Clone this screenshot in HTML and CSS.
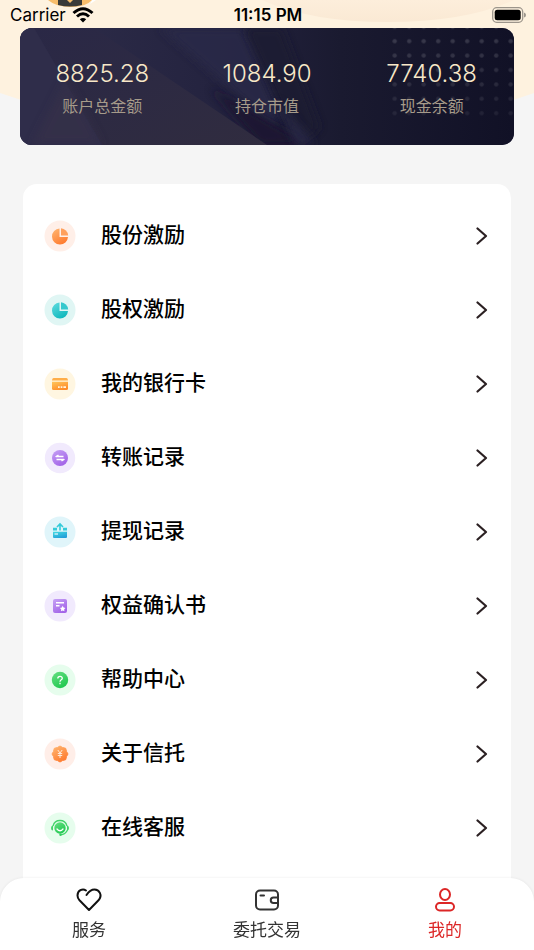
FILE: index.html
```html
<!DOCTYPE html>
<html lang="zh-CN">
<head>
  <meta charset="UTF-8" />
  <meta name="viewport" content="width=device-width, initial-scale=1" />
  <title>我的</title>
  <link rel="stylesheet" href="styles.css">
</head>
<body>

  <!-- header background -->
  <svg class="header-bg" viewBox="0 0 534 140" preserveAspectRatio="none" aria-hidden="true">
    <defs>
      <linearGradient id="ring" x1="0" y1="0" x2="0" y2="1">
        <stop offset="0" stop-color="#fdeedb" />
        <stop offset="1" stop-color="#fae9d4" />
      </linearGradient>
    </defs>
    <path d="M0 0H534V93Q400 140 267 140T0 93Z" fill="#fef2df" />
    <path d="M262 0Q310 22 388 22T514 0Z" fill="url(#ring)" />
    <path d="M92 0H96L90 4Z" fill="#fff" />
    <path d="M48 0Q56 7 71 7T92 0Z" fill="#f7bd6b" />
    <path d="M58 0H82V5Q70 8 58 5Z" fill="#393a38" />
    <path d="M67 0H73L70 3Z" fill="#f7bd6b" />
  </svg>

  <header class="status-bar">
    <div class="carrier">
      <span>Carrier</span>
      <svg width="22" height="16" viewBox="0 0 22 16" fill="none" stroke="#000" stroke-width="3">
        <path d="M1.5 6Q11-2.5 20.500 6" />
        <path d="M5 9.500Q11 4 17 9.500" />
        <path d="M7.800 12.300L11 15.500L14.200 12.300Q11 9.800 7.800 12.300Z" fill="#000" stroke="none" />
      </svg>
    </div>
    <div class="time">11:15 PM</div>
    <div class="battery">
      <svg width="34" height="16" viewBox="0 0 34 16">
        <rect x="0.7" y="0.7" width="30" height="14.600" rx="4" fill="none" stroke="#9c958b" stroke-width="1.300" />
        <rect x="2.700" y="2.700" width="26" height="10.600" rx="2.500" fill="#000" />
        <path d="M32 5.500Q34 6 34 8T32 10.500Z" fill="#9c958b" />
      </svg>
    </div>
  </header>

  <main>
    <section class="account">
      <svg class="account-bg" viewBox="0 0 494 117" preserveAspectRatio="none" aria-hidden="true">
        <defs>
          <linearGradient id="card" x1="0" y1="0" x2="1" y2="0">
            <stop offset="0" stop-color="#2e2d4a" />
            <stop offset="0.4" stop-color="#24233f" />
            <stop offset="0.65" stop-color="#1a1a30" />
            <stop offset="1" stop-color="#111126" />
          </linearGradient>
          <linearGradient id="beam" x1="0" y1="0" x2="1" y2="1">
            <stop offset="0" stop-color="#2a2846" />
            <stop offset="1" stop-color="#302c3f" />
          </linearGradient>
          <linearGradient id="fade" x1="0" y1="0" x2="0" y2="1">
            <stop offset="0" stop-color="#fff" stop-opacity="0.16" />
            <stop offset="1" stop-color="#fff" stop-opacity="0.06" />
          </linearGradient>
          <filter id="soft"><feGaussianBlur stdDeviation="4" /></filter>
          <pattern id="dots" x="0" y="6" width="14.500" height="14.400" patternUnits="userSpaceOnUse" patternTransform="translate(367.500 0)">
            <circle cx="7.200" cy="7.200" r="2.200" fill="#fff" />
          </pattern>
          <mask id="dotMask">
            <rect x="367.500" y="0" width="127" height="93" fill="url(#dots)" />
          </mask>
        </defs>
        <rect width="494" height="117" fill="url(#card)" />
        <path d="M140 0H224L262 90L250 95Z" fill="#2b2a48" opacity="0.8" filter="url(#soft)" />
        <path d="M224 0H262L300 100L278 117Z" fill="#1b1a32" opacity="0.8" filter="url(#soft)" />
        <path d="M190 60L290 117H240Z" fill="#1a1930" opacity="0.9" filter="url(#soft)" />
        <path d="M255 70L296 117H276Z" fill="#2b2948" opacity="0.8" filter="url(#soft)" />
        <path d="M14 0H74L247 117H82Z" fill="url(#beam)" />
        <path d="M0 0H14L82 117H0Z" fill="#2f2d4a" />
        <path d="M46 50L82 117H12Z" fill="#393249" opacity="0.6" filter="url(#soft)" />
        <rect x="367" width="127" height="93" fill="url(#fade)" mask="url(#dotMask)" />
      </svg>
      <dl class="amounts">
        <div class="amount"><dt>账户总金额</dt><dd>8825.28</dd></div>
        <div class="amount"><dt>持仓市值</dt><dd>1084.90</dd></div>
        <div class="amount"><dt>现金余额</dt><dd>7740.38</dd></div>
      </dl>
    </section>

    <!-- shared icon pieces -->
    <svg class="defs" aria-hidden="true">
      <defs>
        <linearGradient id="orange" x1="0" y1="0" x2="0.6" y2="1"><stop offset="0" stop-color="#ffb873" /><stop offset="1" stop-color="#ff7c30" /></linearGradient>
        <linearGradient id="teal" x1="0" y1="0" x2="0.6" y2="1"><stop offset="0" stop-color="#62dce0" /><stop offset="1" stop-color="#10b9bd" /></linearGradient>
        <linearGradient id="amber" x1="0" y1="0" x2="0.6" y2="1"><stop offset="0" stop-color="#ffc65c" /><stop offset="1" stop-color="#ff8b29" /></linearGradient>
        <linearGradient id="purple" x1="0" y1="0" x2="0.6" y2="1"><stop offset="0" stop-color="#c6a2f5" /><stop offset="1" stop-color="#a364e8" /></linearGradient>
        <linearGradient id="cyan" x1="0" y1="0" x2="0.6" y2="1"><stop offset="0" stop-color="#43dce1" /><stop offset="1" stop-color="#239fd9" /></linearGradient>
        <linearGradient id="green" x1="0" y1="0" x2="0.6" y2="1"><stop offset="0" stop-color="#68df83" /><stop offset="1" stop-color="#21c951" /></linearGradient>
        <symbol id="arrow" viewBox="0 0 12 18"><path d="M1.500 1.500L10 9L1.500 16.500" fill="none" stroke="#2b2022" stroke-width="2.200" stroke-linecap="round" stroke-linejoin="round" /></symbol>
      </defs>
    </svg>

    <nav class="menu">
      <a class="menu-item" href="#">
        <svg class="icon" viewBox="0 0 32 32">
          <circle cx="16" cy="16" r="15.500" fill="#ffefe8" />
          <path d="M15.500 8.500A8 8 0 1 0 24 17H15.500Z" fill="url(#orange)" />
          <path d="M17 8.300A8 8 0 0 1 24.200 15.500H17Z" fill="#ffa05c" />
        </svg>
        <span>股份激励</span>
        <svg class="arrow"><use href="#arrow" /></svg>
      </a>
      <a class="menu-item" href="#">
        <svg class="icon" viewBox="0 0 32 32">
          <circle cx="16" cy="16" r="15.500" fill="#e0f6f4" />
          <path d="M15.500 8.500A8 8 0 1 0 24 17H15.500Z" fill="url(#teal)" />
          <path d="M17 8.300A8 8 0 0 1 24.200 15.500H17Z" fill="#35c8cd" />
        </svg>
        <span>股权激励</span>
        <svg class="arrow"><use href="#arrow" /></svg>
      </a>
      <a class="menu-item" href="#">
        <svg class="icon" viewBox="0 0 32 32">
          <circle cx="16" cy="16" r="15.500" fill="#fff6e1" />
          <path d="M9.500 10H22.500Q24 10 24 12.500H8Q8 10 9.500 10Z" fill="#ffae49" />
          <path d="M8 13.800H24V20.500Q24 22 22.500 22H9.500Q8 22 8 20.500Z" fill="url(#amber)" />
          <path d="M14 19.200H15.700M16.700 19.200H18.400M19.400 19.200H22" stroke="#fff3df" stroke-width="1.800" />
        </svg>
        <span>我的银行卡</span>
        <svg class="arrow"><use href="#arrow" /></svg>
      </a>
      <a class="menu-item" href="#">
        <svg class="icon" viewBox="0 0 32 32">
          <circle cx="16" cy="16" r="15.200" fill="#f1eafd" />
          <circle cx="16" cy="16" r="8" fill="url(#purple)" />
          <path d="M19.500 14.500H12L14.500 13M12.500 17.500H20L17.500 19" fill="none" stroke="#fff" stroke-width="1.400" stroke-linejoin="round" />
        </svg>
        <span>转账记录</span>
        <svg class="arrow"><use href="#arrow" /></svg>
      </a>
      <a class="menu-item" href="#">
        <svg class="icon" viewBox="0 0 32 32">
          <circle cx="16" cy="16" r="15.500" fill="#e0f5fa" />
          <path d="M9 11.800H13V14.400H9ZM19 11.800H23V14.400H19Z" fill="#35cbd9" />
          <path d="M16 14.400V8.500M13 11L16 8L19 11" fill="none" stroke="#35cbd9" stroke-width="1.600" />
          <path d="M9 15.800H23V21Q23 22 22 22H10Q9 22 9 21Z" fill="url(#cyan)" />
          <path d="M10.500 18H14" stroke="#e0f5fa" stroke-width="1.300" />
        </svg>
        <span>提现记录</span>
        <svg class="arrow"><use href="#arrow" /></svg>
      </a>
      <a class="menu-item" href="#">
        <svg class="icon" viewBox="0 0 32 32">
          <circle cx="16" cy="16" r="15.500" fill="#f1eafd" />
          <rect x="9" y="9" width="14" height="14" rx="2" fill="url(#purple)" />
          <path d="M12 12.800H20M12 15.800H15.500" stroke="#fff" stroke-width="1.400" />
          <path d="M18.700 15.800L19.600 17.500L21.500 17.900L20.200 19.300L20.400 21.200L18.700 20.400L17 21.200L17.200 19.300L15.900 17.900L17.800 17.500Z" fill="#fff" />
        </svg>
        <span>权益确认书</span>
        <svg class="arrow"><use href="#arrow" /></svg>
      </a>
      <a class="menu-item" href="#">
        <svg class="icon" viewBox="0 0 32 32">
          <circle cx="16" cy="16" r="15.500" fill="#e6fded" />
          <circle cx="16" cy="16" r="8.200" fill="url(#green)" />
          <path d="M13.800 14.500Q13.800 12.300 16 12.300T18.300 14.300Q18.300 15.300 17 16Q16 16.600 16 17.800M16 18.800V20.200" fill="none" stroke="#fff" stroke-width="1.300" />
        </svg>
        <span>帮助中心</span>
        <svg class="arrow"><use href="#arrow" /></svg>
      </a>
      <a class="menu-item" href="#">
        <svg class="icon" viewBox="0 0 32 32">
          <circle cx="16" cy="16" r="15.500" fill="#ffeee8" />
          <path d="M16 8L18.600 9.500L21.700 10.300L22.500 13.400L24 16L22.500 18.600L21.700 21.700L18.600 22.500L16 24L13.400 22.500L10.300 21.700L9.500 18.600L8 16L9.500 13.400L10.300 10.300L13.400 9.500Z" fill="url(#orange)" stroke="url(#orange)" stroke-linejoin="round" />
          <path d="M13.800 12L16 15L18.200 12M16 15V20M13.800 15.500H18.200M13.800 17.500H18.200" fill="none" stroke="#ffe9d9" stroke-width="1" />
        </svg>
        <span>关于信托</span>
        <svg class="arrow"><use href="#arrow" /></svg>
      </a>
      <a class="menu-item" href="#">
        <svg class="icon" viewBox="0 0 32 32">
          <circle cx="16" cy="16" r="15.500" fill="#e6fded" />
          <path d="M9 14Q10.500 8.500 16 8.500T23 14M23.500 18Q21.500 22.500 16.500 22.800" fill="none" stroke="#43d46a" stroke-width="1.300" />
          <path d="M9 13.500V18.500Q7 18.500 7 16T9 13.500ZM23 13.500V18.500Q25 18.500 25 16T23 13.500Z" fill="#43d46a" />
          <circle cx="16" cy="16" r="5.700" fill="url(#green)" />
          <circle cx="16.500" cy="22.700" r="1.200" fill="#35cd5f" />
          <path d="M13 17Q16 20.500 19 17" fill="none" stroke="#fff" stroke-width="1.300" stroke-linecap="round" />
        </svg>
        <span>在线客服</span>
        <svg class="arrow"><use href="#arrow" /></svg>
      </a>
    </nav>
  </main>

  <nav class="tab-bar">
    <a class="tab" href="#">
      <svg width="28" height="26" viewBox="0 0 28 26" fill="none" stroke="#111" stroke-width="2" stroke-linecap="round" stroke-linejoin="round">
        <path d="M11 4.500C7.500 2 2.500 4.500 2.500 9.500C2.500 11.500 3.300 13 4.500 14.300L14 24L23.500 14.300C28 9 24 3.500 19.500 3.500C16 3.500 13.500 6 11.500 9" />
      </svg>
      <span>服务</span>
    </a>
    <a class="tab" href="#">
      <svg width="28" height="26" viewBox="0 0 28 26" fill="none" stroke="#333" stroke-width="2" stroke-linecap="round" stroke-linejoin="round">
        <rect x="3" y="4.500" width="22" height="19" rx="4" />
        <path d="M7.500 9.500H11M25 11.500H20.500A2.700 2.700 0 0 0 20.500 17H25" />
      </svg>
      <span>委托交易</span>
    </a>
    <a class="tab active" href="#">
      <svg width="28" height="26" viewBox="0 0 28 26" fill="none" stroke="#dc2626" stroke-width="2">
        <ellipse cx="14" cy="8.500" rx="5" ry="5.500" />
        <rect x="5" y="17" width="18" height="7.500" rx="3.700" />
      </svg>
      <span>我的</span>
    </a>
  </nav>

</body>
</html>
```

FILE: styles.css
```css
* {
  box-sizing: border-box;
}

body {
  margin: 0;
  height: 100vh;
  overflow: hidden;
  position: relative;
  display: flex;
  flex-direction: column;
  background: #f5f5f5;
  color: #000;
  font-family: Inter, "Noto Sans CJK SC", sans-serif;
}

a {
  color: inherit;
  text-decoration: none;
}

/* curved cream background behind the header */
.header-bg {
  position: absolute;
  top: 0;
  left: 0;
  width: 100%;
  height: 140px;
}

.status-bar {
  position: relative;
  flex: none;
  display: grid;
  grid-template-columns: 1fr auto 1fr;
  align-items: center;
  height: 28px;
  padding: 1px 8px 0 10px;
  font-size: 17px;
  line-height: 24px;
}

.carrier {
  display: flex;
  align-items: center;
  gap: 6px;
}

.time {
  font-weight: 600;
}

.battery {
  display: flex;
  justify-content: flex-end;
}

main {
  position: relative;
  flex: 1;
  min-height: 0;
}

/* account card */
.account {
  position: relative;
  margin: 0 20px;
  border-radius: 12px;
  overflow: hidden;
  background: #24233f;
}

.account-bg {
  position: absolute;
  inset: 0;
  width: 100%;
  height: 100%;
}

.amounts {
  position: relative;
  display: grid;
  grid-template-columns: repeat(3, 1fr);
  margin: 0;
  padding: 30px 0 27px;
}

.amount {
  display: flex;
  flex-direction: column-reverse;
  gap: 4px;
  text-align: center;
}

.amount dd {
  margin: 0;
  color: #f8e8c8;
  font-size: 24px;
  font-weight: 300;
  line-height: 32px;
}

.amount dt {
  color: #a69b8a;
  font-size: 16px;
  line-height: 24px;
}

.defs {
  position: absolute;
  width: 0;
  height: 0;
}

/* menu list */
.menu {
  margin: 39px 23px 0;
  padding: 15px 23px 80px 21px;
  border-radius: 14px;
  background: #fff;
}

.menu-item {
  display: flex;
  align-items: center;
  height: 74px;
  font-size: 21px;
  font-weight: 500;
  line-height: 32px;
}

.menu-item span {
  flex: 1;
  margin-left: 25px;
  padding-bottom: 2px;
}

.icon {
  width: 32px;
  height: 32px;
}

.arrow {
  width: 12px;
  height: 18px;
}

/* bottom tabs */
.tab-bar {
  position: fixed;
  left: 0;
  right: 0;
  bottom: 0;
  display: grid;
  grid-template-columns: repeat(3, 1fr);
  padding: 8px 0;
  border-radius: 24px 24px 0 0;
  background: #fff;
  box-shadow: 0 0 3px rgba(0, 0, 0, 0.08);
}

.tab {
  display: flex;
  flex-direction: column;
  align-items: center;
  gap: 6px;
  color: #333;
  font-size: 17px;
  line-height: 24px;
}

.tab.active {
  color: #dc2626;
}
```
